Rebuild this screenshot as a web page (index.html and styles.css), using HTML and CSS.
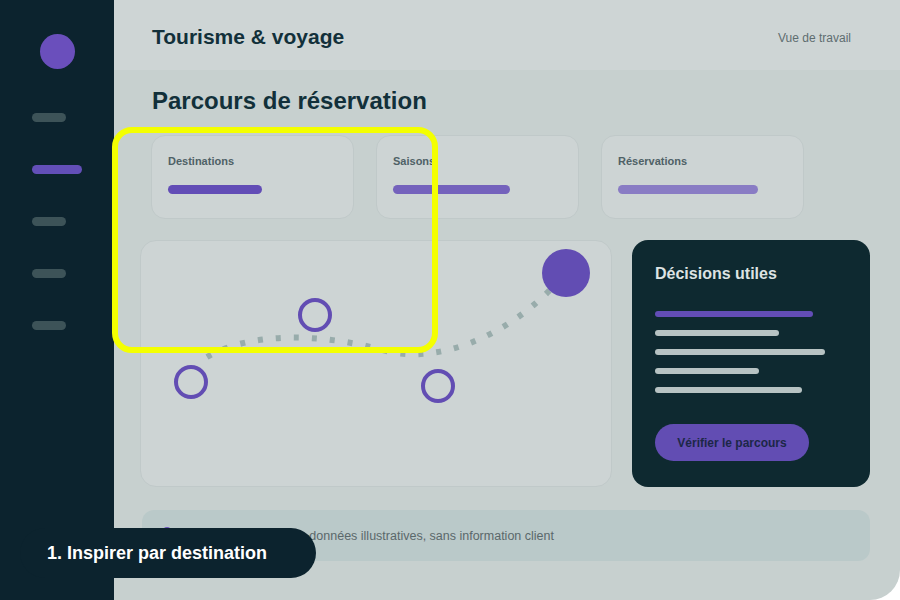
FILE: index.html
```html
<!DOCTYPE html>
<html lang="fr">
<head>
    <meta charset="UTF-8">
    <meta name="viewport" content="width=device-width, initial-scale=1.0">
    <title>Tourisme &amp; voyage</title>
    <link rel="stylesheet" href="styles.css">
</head>
<body>
    <div class="app">
        <aside class="sidebar">
            <div class="avatar"></div>
            <nav class="nav">
                <span class="nav-item"></span>
                <span class="nav-item active"></span>
                <span class="nav-item"></span>
                <span class="nav-item"></span>
                <span class="nav-item"></span>
            </nav>
        </aside>

        <main class="main">
            <header class="topbar">
                <h1>Tourisme &amp; voyage</h1>
                <span class="view-label">Vue de travail</span>
            </header>

            <section class="content">
                <h2 class="page-title">Parcours de réservation</h2>

                <div class="cards">
                    <div class="card">
                        <div class="card-label">Destinations</div>
                        <div class="card-bar bar-1"></div>
                    </div>
                    <div class="card">
                        <div class="card-label">Saisons</div>
                        <div class="card-bar bar-2"></div>
                    </div>
                    <div class="card">
                        <div class="card-label">Réservations</div>
                        <div class="card-bar bar-3"></div>
                    </div>
                </div>

                <div class="board">
                    <div class="chart">
                        <svg width="472" height="247" viewBox="0 0 472 247">
                            <path d="M67 117 C 110 92, 180 92, 250 112 C 300 122, 362 98, 410 50" fill="none" stroke="#98acab" stroke-width="6" stroke-dasharray="5 13"/>
                            <circle cx="51" cy="142" r="15" fill="none" stroke="#624db3" stroke-width="4"/>
                            <circle cx="175" cy="75" r="15" fill="none" stroke="#624db3" stroke-width="4"/>
                            <circle cx="298" cy="146" r="15" fill="none" stroke="#624db3" stroke-width="4"/>
                            <circle cx="426" cy="33" r="24" fill="#624db3"/>
                        </svg>
                    </div>

                    <div class="decisions">
                        <h3>Décisions utiles</h3>
                        <div class="lines">
                            <span class="line purple" style="width: 158px"></span>
                            <span class="line" style="width: 124px"></span>
                            <span class="line" style="width: 170px"></span>
                            <span class="line" style="width: 104px"></span>
                            <span class="line" style="width: 147px"></span>
                        </div>
                        <button class="btn">Vérifier le parcours</button>
                    </div>
                </div>

                <div class="note">
                    <span class="note-dot"></span>
                    <span>Mode démonstration : données illustratives, sans information client</span>
                </div>
            </section>
        </main>
    </div>

    <div class="highlight"></div>
    <div class="step-tip">1. Inspirer par destination</div>
</body>
</html>
```

FILE: styles.css
```css
* {
    box-sizing: border-box;
}
body {
    margin: 0;
    background: #ffffff;
    font-family: "Liberation Sans", Arial, sans-serif;
}
.app {
    display: flex;
    width: 900px;
    height: 600px;
}
.sidebar {
    width: 114px;
    background: #0c232e;
    display: flex;
    flex-direction: column;
    align-items: flex-start;
    padding: 34px 0 0 32px;
}
.avatar {
    width: 35px;
    height: 35px;
    border-radius: 50%;
    background: #6a4fbc;
    margin-left: 8px;
}
.nav {
    display: flex;
    flex-direction: column;
    gap: 43px;
    margin-top: 44px;
}
.nav-item {
    display: block;
    width: 34px;
    height: 9px;
    border-radius: 5px;
    background: #3d5358;
}
.nav-item.active {
    width: 50px;
    background: #634fb8;
}
.main {
    flex: 1;
    background: #c7d0cf;
    border-bottom-right-radius: 30px;
    overflow: hidden;
}
.topbar {
    height: 70px;
    background: #ced5d5;
    display: flex;
    align-items: center;
    justify-content: space-between;
    padding: 4px 49px 0 38px;
}
.topbar h1 {
    margin: 0;
    font-size: 21px;
    color: #12303a;
}
.view-label {
    font-size: 12px;
    color: #5e6d70;
    margin-top: 2px;
}
.content {
    padding: 0 30px 0 26px;
}
.page-title {
    margin: 18px 0 0 12px;
    font-size: 24px;
    line-height: 26px;
    color: #12303a;
}
.cards {
    display: grid;
    grid-template-columns: repeat(3, 203px);
    gap: 22px;
    margin: 21px 0 0 11px;
}
.card {
    height: 84px;
    background: #cdd4d4;
    border: 1px solid #c0c9c9;
    border-radius: 14px;
    padding: 19px 16px 0;
}
.card-label {
    font-size: 11px;
    font-weight: bold;
    color: #4f6166;
}
.card-bar {
    height: 9px;
    border-radius: 5px;
    margin-top: 18px;
}
.bar-1 {
    width: 94px;
    background: #624db6;
}
.bar-2 {
    width: 117px;
    background: #7462bc;
}
.bar-3 {
    width: 140px;
    background: #897cc4;
}
.board {
    display: grid;
    grid-template-columns: 472px 238px;
    gap: 20px;
    margin-top: 21px;
}
.chart {
    height: 247px;
    background: #cdd4d4;
    border: 1px solid #c0c9c9;
    border-radius: 16px;
    overflow: hidden;
}
.chart svg {
    display: block;
    margin: -1px;
}
.decisions {
    height: 247px;
    background: #0e2930;
    border-radius: 16px;
    padding: 25px 23px 0;
}
.decisions h3 {
    margin: 0;
    font-size: 16px;
    color: #dde3e3;
}
.lines {
    display: flex;
    flex-direction: column;
    gap: 13px;
    margin-top: 28px;
}
.line {
    display: block;
    height: 6px;
    border-radius: 3px;
    background: #b7c3c3;
}
.line.purple {
    background: #624db6;
}
.btn {
    margin-top: 31px;
    width: 154px;
    height: 37px;
    border: none;
    border-radius: 19px;
    background: #624db3;
    color: #1c2747;
    font-family: inherit;
    font-size: 12px;
    font-weight: bold;
}
.note {
    display: flex;
    align-items: center;
    gap: 14px;
    height: 51px;
    margin: 23px 0 0 2px;
    background: #bac9c9;
    border-radius: 12px;
    padding: 0 21px;
    font-size: 12.5px;
    color: #5a686b;
}
.note-dot {
    width: 8px;
    height: 8px;
    border-radius: 50%;
    background: #6a4fbc;
    margin-top: -10px;
}
.highlight {
    position: absolute;
    left: 112px;
    top: 127px;
    width: 326px;
    height: 226px;
    border: 6px solid #f4ff00;
    border-radius: 20px;
}
.step-tip {
    position: absolute;
    left: 20px;
    top: 528px;
    width: 296px;
    height: 50px;
    background: #0c232e;
    border-radius: 25px;
    padding-left: 27px;
    display: flex;
    align-items: center;
    color: #ffffff;
    font-size: 18px;
    font-weight: bold;
}
```
